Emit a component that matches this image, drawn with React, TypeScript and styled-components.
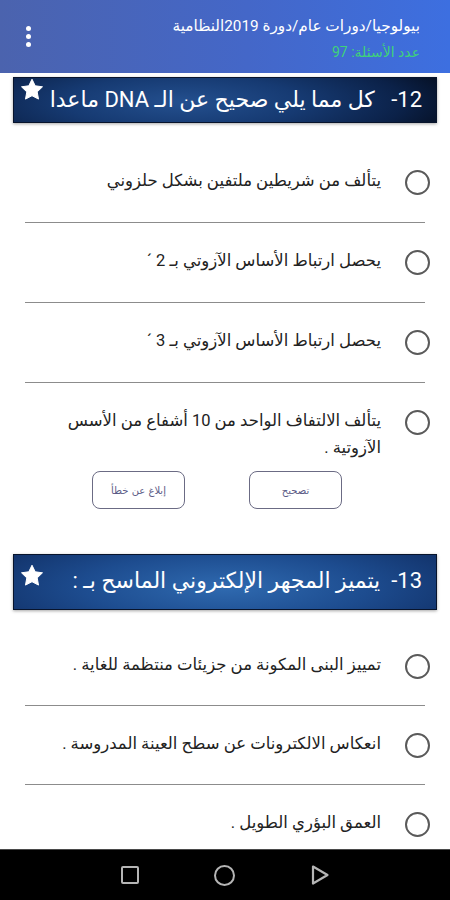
import React from "react";
import styled, { createGlobalStyle } from "styled-components";

const GlobalStyle = createGlobalStyle`
  html, body {
    margin: 0;
    padding: 0;
    background: #ffffff;
  }
  * {
    box-sizing: border-box;
  }
`;

type Question = {
  num: number;
  title: string;
  options: string[];
  tall?: boolean;
  actions?: boolean;
};

const questions: Question[] = [
  {
    num: 12,
    title: "كل مما يلي صحيح عن الـ DNA ماعدا",
    options: [
      "يتألف من شريطين ملتفين بشكل حلزوني",
      "يحصل ارتباط الأساس الآزوتي بـ  2 ´",
      "يحصل ارتباط الأساس الآزوتي بـ  3 ´",
      "يتألف الالتفاف الواحد من 10 أشفاع من الأسس الآزوتية .",
    ],
    actions: true,
  },
  {
    num: 13,
    title: "يتميز المجهر الإلكتروني الماسح بـ :",
    options: [
      "تمييز البنى المكونة من جزيئات منتظمة للغاية .",
      "انعكاس الالكترونات عن سطح العينة المدروسة .",
      "العمق البؤري الطويل .",
    ],
    tall: true,
  },
];

const StarIcon = () => (
  <svg width="24" height="23" viewBox="0 0 24 23">
    <path
      d="M12 1.2l3.2 6.6 7.3 1-5.3 5.1 1.3 7.2L12 17.7l-6.5 3.4 1.3-7.2L1.5 8.8l7.3-1z"
      fill="#ffffff"
      stroke="#ffffff"
      strokeWidth="1"
      strokeLinejoin="round"
    />
  </svg>
);

const App: React.FC = () => {
  return (
    <>
      <GlobalStyle />
      <Screen>
        <Header>
          <Kebab>
            <Dot />
            <Dot />
            <Dot />
          </Kebab>
          <HeaderText dir="rtl">
            <HeaderTitle>بيولوجيا/دورات عام/دورة 2019النظامية</HeaderTitle>
            <HeaderCount>عدد الأسئلة: 97</HeaderCount>
          </HeaderText>
        </Header>

        <Content dir="rtl">
          {questions.map((q) => (
            <QuestionBlock key={q.num}>
              <QuestionBar $tall={q.tall}>
                <QuestionTitle $tall={q.tall}>
                  {q.num}-{q.tall ? "  " : "   "}
                  {q.title}
                </QuestionTitle>
                <StarSlot $tall={q.tall}>
                  <StarIcon />
                </StarSlot>
              </QuestionBar>
              <OptionList $tight={q.tall}>
                {q.options.map((opt, i) => (
                  <OptionRow
                    key={i}
                    $last={i === q.options.length - 1}
                    $tight={q.tall}
                  >
                    <Radio />
                    <OptionText>{opt}</OptionText>
                  </OptionRow>
                ))}
              </OptionList>
              {q.actions && (
                <Actions>
                  <ActionButton>تصحيح</ActionButton>
                  <ActionButton>إبلاغ عن خطأ</ActionButton>
                </Actions>
              )}
            </QuestionBlock>
          ))}
        </Content>

        <NavBar>
          <NavSquare />
          <NavCircle />
          <svg width="20" height="22" viewBox="0 0 20 22">
            <path
              d="M3 2.5L17.5 11 3 19.5z"
              fill="none"
              stroke="#b5b5b5"
              strokeWidth="2.2"
              strokeLinejoin="round"
            />
          </svg>
        </NavBar>
      </Screen>
    </>
  );
};

const Screen = styled.div`
  width: 450px;
  height: 900px;
  display: flex;
  flex-direction: column;
  overflow: hidden;
  background: #ffffff;
  font-family: Roboto, "DejaVu Sans", sans-serif;
`;

const Header = styled.header`
  height: 73px;
  flex-shrink: 0;
  display: flex;
  align-items: center;
  justify-content: space-between;
  padding: 4px 30px 0 26px;
  background: linear-gradient(90deg, #4b63ae 0%, #4467c8 55%, #3d6fe0 100%);
`;

const Kebab = styled.div`
  display: flex;
  flex-direction: column;
  gap: 3px;
  margin-top: -4px;
`;

const Dot = styled.span`
  width: 5px;
  height: 5px;
  border-radius: 50%;
  background: #ffffff;
`;

const HeaderText = styled.div`
  display: flex;
  flex-direction: column;
  gap: 9px;
  text-align: right;
`;

const HeaderTitle = styled.div`
  font-size: 15.3px;
  color: #ffffff;
  line-height: 18px;
`;

const HeaderCount = styled.div`
  font-size: 14px;
  color: #3fd27a;
  line-height: 17px;
`;

const Content = styled.main`
  flex: 1;
  overflow: hidden;
  padding-top: 4px;
  display: flex;
  flex-direction: column;
  gap: 45px;
`;

const QuestionBlock = styled.section`
  display: flex;
  flex-direction: column;
`;

const QuestionBar = styled.div<{ $tall?: boolean }>`
  position: relative;
  margin: 0 13px;
  height: ${(p) => (p.$tall ? 56 : 46)}px;
  display: flex;
  align-items: center;
  padding: 0 14px 0 40px;
  border: 1px solid #08142c;
  box-shadow: 0 1px 3px rgba(0, 0, 0, 0.35);
  background: ${(p) =>
    p.$tall
      ? "radial-gradient(ellipse 75% 140% at 50% 60%, #2f6ab0 0%, #1d4c8f 45%, #12336b 80%, #0c2552 100%)"
      : "radial-gradient(ellipse 70% 150% at 40% 55%, #24508f 0%, #163a72 40%, #0b2148 75%, #040b1a 100%)"};
`;

const QuestionTitle = styled.div<{ $tall?: boolean }>`
  color: #ffffff;
  font-size: 22px;
  white-space: pre;
  line-height: 1;
  margin-top: ${(p) => (p.$tall ? -2 : 0)}px;
`;

const StarSlot = styled.span<{ $tall?: boolean }>`
  position: absolute;
  left: 6px;
  top: ${(p) => (p.$tall ? 9 : 0)}px;
  display: flex;
`;

const OptionList = styled.div<{ $tight?: boolean }>`
  display: flex;
  flex-direction: column;
  margin-top: ${(p) => (p.$tight ? 17 : 20)}px;
`;

const OptionRow = styled.div<{ $last?: boolean; $tight?: boolean }>`
  display: flex;
  align-items: flex-start;
  gap: 24px;
  margin: 0 25px;
  padding: 24px 0 ${(p) => (p.$last ? 14 : p.$tight ? 26 : 27)}px 12px;
  border-bottom: ${(p) => (p.$last ? "none" : "1.5px solid #8c8c8c")};
`;

const Radio = styled.span`
  flex-shrink: 0;
  width: 25px;
  height: 25px;
  margin-top: 3px;
  margin-right: -5px;
  border: 2px solid #5a5a5a;
  border-radius: 50%;
`;

const OptionText = styled.div`
  flex: 1;
  font-size: 16.5px;
  line-height: 27px;
  color: #222222;
`;

const Actions = styled.div`
  display: flex;
  justify-content: center;
  gap: 64px;
  padding-right: 16px;
  margin-top: -4px;
`;

const ActionButton = styled.button`
  width: 93px;
  height: 38px;
  background: #ffffff;
  border: 1.5px solid #6b6b84;
  border-radius: 8px;
  color: #5b5b86;
  font-family: "DejaVu Sans", sans-serif;
  font-size: 10px;
  padding: 0;
`;

const NavBar = styled.nav`
  height: 51px;
  flex-shrink: 0;
  background: #000000;
  border-top: 1px solid #4a4a4a;
  display: flex;
  align-items: center;
  justify-content: center;
  gap: 75px;
`;

const NavSquare = styled.span`
  width: 18px;
  height: 18px;
  border: 2px solid #b5b5b5;
  border-radius: 2px;
`;

const NavCircle = styled.span`
  width: 21px;
  height: 21px;
  border: 2px solid #b5b5b5;
  border-radius: 50%;
`;

export default App;
